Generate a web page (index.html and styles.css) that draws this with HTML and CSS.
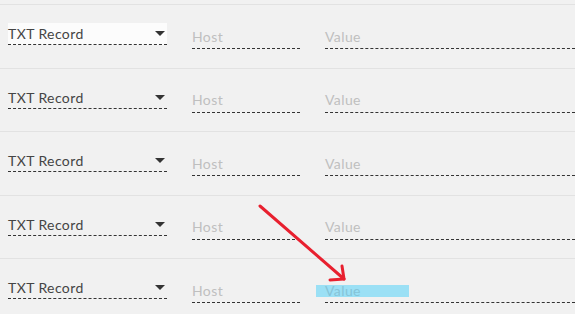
FILE: index.html
```html
<!DOCTYPE html>
<html lang="en">

<head>
  <meta charset="UTF-8">
  <meta name="viewport" content="width=device-width, initial-scale=1.0">
  <title>DNS records</title>
  <link rel="stylesheet" href="styles.css">
</head>

<body>
  <div class="records">
    <div class="row">
      <div class="select active">
        <span>TXT Record</span>
        <span class="caret"></span>
      </div>
      <div class="field host"><span class="ph">Host</span></div>
      <div class="field value"><span class="ph">Value</span></div>
    </div>

    <div class="row">
      <div class="select">
        <span>TXT Record</span>
        <span class="caret"></span>
      </div>
      <div class="field host"><span class="ph">Host</span></div>
      <div class="field value"><span class="ph">Value</span></div>
    </div>

    <div class="row">
      <div class="select">
        <span>TXT Record</span>
        <span class="caret"></span>
      </div>
      <div class="field host"><span class="ph">Host</span></div>
      <div class="field value"><span class="ph">Value</span></div>
    </div>

    <div class="row">
      <div class="select">
        <span>TXT Record</span>
        <span class="caret"></span>
      </div>
      <div class="field host"><span class="ph">Host</span></div>
      <div class="field value"><span class="ph">Value</span></div>
    </div>

    <div class="row">
      <div class="select">
        <span>TXT Record</span>
        <span class="caret"></span>
      </div>
      <div class="field host"><span class="ph">Host</span></div>
      <div class="field value">
        <span class="mark"></span>
        <span class="ph">Value</span>
      </div>
    </div>
  </div>

  <svg class="arrow" width="120" height="100" viewBox="0 0 120 100">
    <g fill="none" stroke="#e8202f" stroke-width="3" stroke-linecap="round" stroke-linejoin="round">
      <path d="M2 3 L86 76" />
      <path d="M72 77 L86 76 L84 63" />
    </g>
  </svg>
</body>

</html>
```

FILE: styles.css
```css
html,
body {
  margin: 0;
  height: 100%;
  background-color: #f1f1f1;
  font-family: Lato, "Open Sans", sans-serif;
  font-size: 14px;
  letter-spacing: .4px;
}

body {
  position: relative;
  overflow: hidden;
}

.records {
  padding-top: 4px;
}

.row {
  display: flex;
  align-items: flex-start;
  gap: 25px;
  height: 62.5px;
  padding-left: 8px;
  border-top: 1px solid #e2e2e2;
}

.select {
  margin-top: 18px;
  width: 159px;
  height: 21px;
  display: flex;
  align-items: center;
  justify-content: space-between;
  border-bottom: 1px dashed #333;
  color: #444;
}

.select.active {
  background-color: #fcfcfc;
}

.caret {
  width: 0;
  height: 0;
  margin-right: 2px;
  border-left: 5px solid transparent;
  border-right: 5px solid transparent;
  border-top: 5px solid #333;
}

.field {
  position: relative;
  margin-top: 21px;
  height: 22px;
  display: flex;
  align-items: center;
  border-bottom: 1px dashed #333;
}

.host {
  width: 108px;
}

.value {
  flex: 1;
}

.ph {
  position: relative;
  margin-top: -2px;
  color: #bfbfbf;
}

.mark {
  position: absolute;
  left: -9px;
  top: 5px;
  width: 93px;
  height: 12px;
  background-color: #9be0f5;
}

.mark + .ph {
  color: #86c4d8;
}

.arrow {
  position: absolute;
  left: 258px;
  top: 203px;
}
```
